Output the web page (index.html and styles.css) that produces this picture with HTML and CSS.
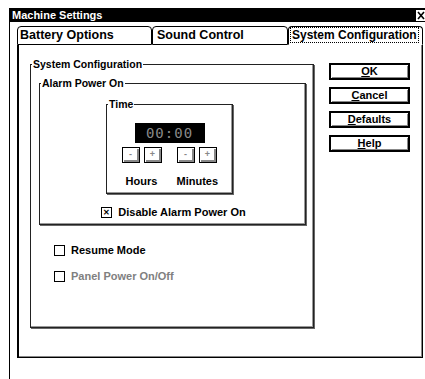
FILE: index.html
```html
<!DOCTYPE html>
<html lang="en">
<head>
    <meta charset="UTF-8">
    <title>Machine Settings</title>
    <link rel="stylesheet" href="styles.css">
</head>
<body>
    <div class="window">
        <div class="titlebar">
            <span class="title">Machine Settings</span>
            <span class="close">
                <svg width="10" height="11" viewBox="0 0 10 11">
                    <path d="M2 2 L8 9 M8 2 L2 9" stroke="#000" stroke-width="1.6" fill="none"/>
                </svg>
            </span>
        </div>
        <div class="client">
            <div class="tabs">
                <div class="tab tab-battery">Battery Options</div>
                <div class="tab tab-sound">Sound Control</div>
                <div class="tab tab-system active"><span class="focus">System Configuration</span></div>
            </div>
            <div class="panel">
                <div class="group sys-group">
                    <div class="legend">System Configuration</div>
                    <div class="group alarm-group">
                        <div class="legend">Alarm Power On</div>
                        <div class="group time-group">
                            <div class="legend">Time</div>
                            <div class="lcd">00:00</div>
                            <div class="spins">
                                <div class="pair">
                                    <div class="spin">-</div>
                                    <div class="spin">+</div>
                                </div>
                                <div class="pair">
                                    <div class="spin">-</div>
                                    <div class="spin">+</div>
                                </div>
                            </div>
                            <div class="units">
                                <span class="unit">Hours</span>
                                <span class="unit">Minutes</span>
                            </div>
                        </div>
                        <div class="check-row centered">
                            <span class="box checked">&#x2715;</span>
                            <span>Disable Alarm Power On</span>
                        </div>
                    </div>
                    <div class="check-row resume">
                        <span class="box"></span>
                        <span>Resume Mode</span>
                    </div>
                    <div class="check-row panel-power disabled">
                        <span class="box"></span>
                        <span>Panel Power On/Off</span>
                    </div>
                </div>
                <div class="buttons">
                    <div class="btn"><u>O</u>K</div>
                    <div class="btn"><u>C</u>ancel</div>
                    <div class="btn"><u>D</u>efaults</div>
                    <div class="btn"><u>H</u>elp</div>
                </div>
            </div>
        </div>
    </div>
</body>
</html>
```

FILE: styles.css
```css
* {
    box-sizing: border-box;
}

html, body {
    margin: 0;
    padding: 0;
    width: 425px;
    height: 379px;
    overflow: hidden;
    background-color: #FFFFFF;
}

body {
    font-family: "Liberation Sans", Arial, sans-serif;
    font-weight: bold;
    font-size: 11px;
    color: #000000;
}

/* Ventana */
.window {
    margin: 8px 0 0 9px;
    width: 430px;
    height: 371px;
    border-left: 1px solid #000000;
}

.titlebar {
    height: 14px;
    background-color: #000000;
    color: #FFFFFF;
    display: flex;
    align-items: center;
    justify-content: space-between;
    padding-left: 2px;
    line-height: 14px;
}

.close {
    width: 10px;
    height: 11px;
    margin-right: 13px;
    background-color: #FFFFFF;
    display: flex;
}

.client {
    padding: 4px 0 0 7px;
}

/* Pestañas */
.tabs {
    display: flex;
    height: 19px;
}

.tab {
    height: 19px;
    border: 1px solid #000000;
    border-radius: 4px 4px 0 0;
    font-size: 12.5px;
    line-height: 16px;
    padding-left: 2px;
}

.tab-battery {
    width: 135px;
}

.tab-sound {
    width: 136px;
    padding-left: 4px;
}

.tab-system {
    width: 135px;
    padding-left: 1px;
    border-bottom-color: transparent;
}

.focus {
    display: inline-block;
    border: 1px dotted #000000;
    padding: 0 1px;
    line-height: 14px;
    font-size: 12px;
}

.panel {
    width: 406px;
    height: 313px;
    border-left: 2px solid #000000;
    border-right: 1px solid #000000;
    border-bottom: 1px solid #000000;
    box-shadow: inset -1px -1px #888888;
    display: flex;
    align-items: flex-start;
    padding: 19px 0 0 11px;
}

/* Marcos de grupo */
.group {
    border: 1px solid #222222;
    box-shadow: inset -1px -1px #999999, 1px 1px #666666;
}

.legend {
    display: block;
    width: max-content;
    height: 13px;
    line-height: 13px;
    margin: -7px 0 0 1px;
    padding: 0 1px;
    background-color: #FFFFFF;
    font-size: 10.5px;
}

.sys-group {
    width: 284px;
    height: 264px;
}

.alarm-group {
    width: 267px;
    height: 142px;
    margin: 12px 0 0 8px;
}

.time-group {
    width: 127px;
    height: 90px;
    margin: 14px 0 0 66px;
}

.lcd {
    width: 70px;
    height: 20px;
    margin: 12px auto 0;
    background-color: #000000;
    color: #8A8A8A;
    font-family: "DejaVu Sans Mono", monospace;
    font-weight: normal;
    font-size: 14px;
    line-height: 20px;
    text-align: center;
    letter-spacing: 1px;
}

.spins {
    display: flex;
    justify-content: center;
    gap: 15px;
    margin-top: 4px;
    padding-right: 1px;
}

.pair {
    display: flex;
    gap: 4px;
}

.spin {
    width: 18px;
    height: 16px;
    border: 1px solid #000000;
    box-shadow: inset 1px 1px #FFFFFF, inset -2px -2px #888888;
    color: #888888;
    font-size: 9px;
    line-height: 13px;
    text-align: center;
}

.units {
    display: flex;
    justify-content: center;
    gap: 15px;
    margin-top: 12px;
    padding-right: 1px;
}

.unit {
    width: 40px;
    text-align: center;
    line-height: 13px;
}

/* Casillas */
.check-row {
    display: flex;
    align-items: center;
    gap: 6px;
    line-height: 13px;
    font-size: 11px;
}

.check-row.centered {
    justify-content: center;
    margin-top: 12px;
    padding-left: 2px;
}

.box {
    width: 11px;
    height: 11px;
    border: 1px solid #000000;
    font-size: 8px;
    line-height: 9px;
    text-align: center;
}

.resume {
    margin: 19px 0 0 23px;
}

.panel-power {
    margin: 13px 0 0 23px;
}

.disabled {
    color: #808080;
}

/* Botones */
.buttons {
    display: flex;
    flex-direction: column;
    gap: 7px;
    margin: -1px 0 0 15px;
}

.btn {
    width: 81px;
    height: 17px;
    border: 2px solid #000000;
    box-shadow: inset 1px 1px #FFFFFF, inset -1px -1px #888888;
    text-align: center;
    line-height: 13px;
}
```
